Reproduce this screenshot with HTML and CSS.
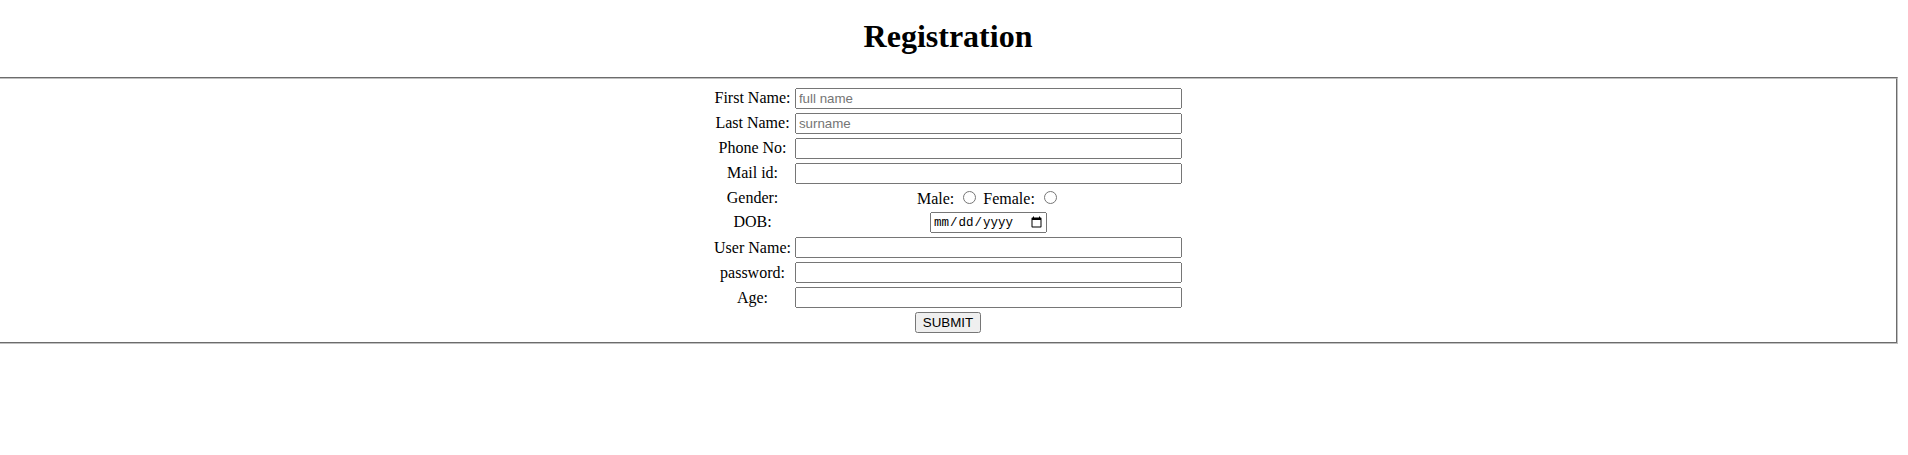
FILE: index.html
```html
<!DOCTYPE html>
<html>
<head>
<meta charset="utf-8">
<title>Registration</title>
<link rel="stylesheet" href="styles.css">
</head>
<body>
<div class="page">
  <h1 class="title">Registration</h1>
  <form class="box">
    <table class="form-table">
      <tr><td>First Name:</td><td><input class="field" type="text" placeholder="full name"></td></tr>
      <tr><td>Last Name:</td><td><input class="field" type="text" placeholder="surname"></td></tr>
      <tr><td>Phone No:</td><td><input class="field" type="text"></td></tr>
      <tr><td>Mail id:</td><td><input class="field" type="text"></td></tr>
      <tr><td>Gender:</td><td>Male: <input type="radio" name="g"> Female: <input type="radio" name="g"></td></tr>
      <tr><td>DOB:</td><td><input class="date" type="date"></td></tr>
      <tr><td>User Name:</td><td><input class="field" type="text"></td></tr>
      <tr><td>password:</td><td><input class="field" type="password"></td></tr>
      <tr><td>Age:</td><td><input class="field" type="text"></td></tr>
      <tr><td colspan="2"><input class="submit" type="submit" value="SUBMIT"></td></tr>
    </table>
  </form>
</div>
</body>
</html>
```
FILE: styles.css
```css
html, body {
  margin: 0;
  padding: 0;
  background: #fff;
}
body {
  font-family: "Liberation Serif", "Times New Roman", serif;
  font-size: 16px;
  color: #000;
}
.page {
  margin: 0 10px 0 -2px;
  padding-top: 1px;
}
.title {
  font-size: 32px;
  font-weight: bold;
  text-align: center;
  margin: 17px 0 22px;
}
.box {
  border: 2px groove rgb(192, 192, 192);
  padding: 5.6px 12px 6px;
  margin: 0;
}
.form-table {
  margin: 0 auto;
  border-spacing: 2px;
  text-align: center;
}
.form-table td {
  padding: 1px;
  vertical-align: middle;
}
.field {
  box-sizing: border-box;
  width: 387px;
  font-family: "Liberation Sans", Arial, sans-serif;
  font-size: 13.333px;
}
.date {
  box-sizing: border-box;
  width: 117px;
  height: 21px;
  font-family: "Liberation Mono", "DejaVu Sans Mono", monospace;
  font-size: 12.5px;
}
.submit {
  font-family: "Liberation Sans", Arial, sans-serif;
  font-size: 13.333px;
}
```
